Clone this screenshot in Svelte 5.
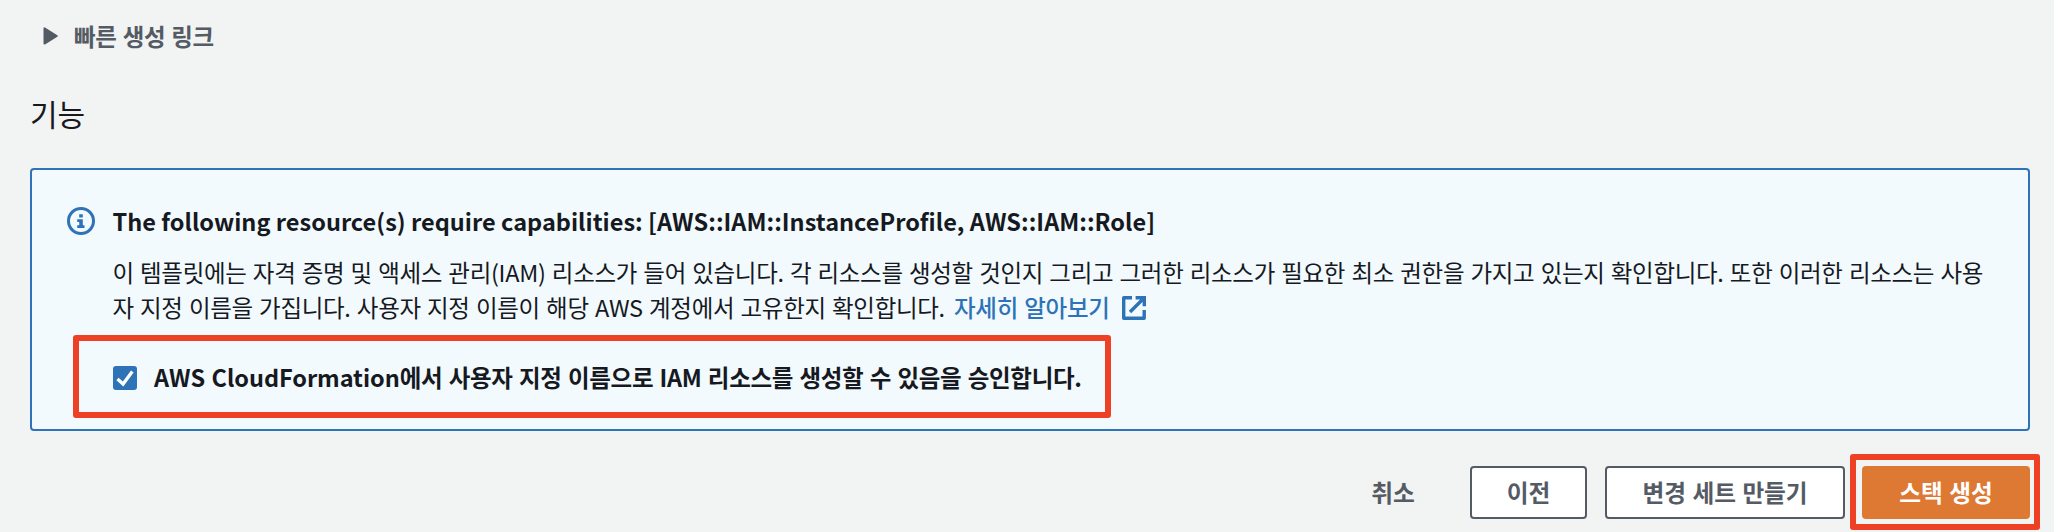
<script>
  let accepted = $state(true);
</script>

<main>
  <div class="expander">
    <svg width="16" height="20" viewBox="0 0 16 20"><path d="M1.5 2.4v15.2L13.8 10z" fill="#545b64" stroke="#545b64" stroke-width="2" stroke-linejoin="round" /></svg>
    <span>빠른 생성 링크</span>
  </div>

  <h2>기능</h2>

  <section class="alert">
    <svg class="info" width="28" height="28" viewBox="0 0 28 28">
      <circle cx="14" cy="14" r="12.5" fill="none" stroke="#2e73b8" stroke-width="3" />
      <path d="M12.2 7.2h3.6v3.2h-3.6zM10.2 12.2h5.6v6h1.7v2.9h-7.3v-2.9h2v-3.1h-2z" fill="#2e73b8" />
    </svg>
    <div class="body">
      <h3>The following resource(s) require capabilities: [AWS::IAM::InstanceProfile, AWS::IAM::Role]</h3>
      <p>
        이 템플릿에는 자격 증명 및 액세스 관리(IAM) 리소스가 들어 있습니다. 각 리소스를 생성할 것인지 그리고 그러한 리소스가 필요한 최소 권한을 가지고 있는지 확인합니다. 또한 이러한 리소스는 사용<br />자 지정 이름을 가집니다. 사용자 지정 이름이 해당 AWS 계정에서 고유한지 확인합니다.
        <a href="#learn">자세히 알아보기<svg width="26" height="26" viewBox="0 0 26 26" fill="none" stroke="#2e73b8" stroke-width="3.4">
            <path d="M11 2.8H2.7v20.5h20.5V15" stroke-linejoin="round" />
            <path d="M14.6 2.7h8.7v8.5M22.8 3.2L9 17" />
          </svg></a>
      </p>
      <label>
        <input type="checkbox" bind:checked={accepted} />
        <span class="box">
          {#if accepted}<svg width="24" height="24" viewBox="0 0 24 24"><path d="M4.5 13l5.6 5L19.3 5.6" fill="none" stroke="#fff" stroke-width="3.3" /></svg>{/if}
        </span>
        <span class="ack"><span class="latin">AWS CloudFormation</span>에서 사용자 지정 이름으로 IAM 리소스를 생성할 수 있음을 승인합니다.</span>
      </label>
    </div>
    <div class="mark mark-ack"></div>
  </section>

  <footer>
    <button class="link">취소</button>
    <button class="prev">이전</button>
    <button class="changeset">변경 세트 만들기</button>
    <div class="primary-wrap">
      <button class="primary">스택 생성</button>
      <div class="mark mark-create"></div>
    </div>
  </footer>
</main>

<style>
  :global(body) {
    background: #f2f3f3;
  }
  main {
    box-sizing: border-box;
    height: 532px;
    overflow: hidden;
    padding: 18px 24px 0 30px;
    font: 23.5px/35px 'Noto Sans CJK KR', 'Noto Sans', sans-serif;
    color: #16191f;
    white-space: nowrap;
  }
  .expander {
    display: flex;
    align-items: center;
    gap: 15px;
    height: 36px;
    padding-left: 13px;
    font-weight: 700;
    color: #545b64;
    letter-spacing: -0.4px;
    word-spacing: 1.3px;
  }
  h2 {
    margin: 37px 0 32px;
    font-size: 30px;
    line-height: 45px;
    font-weight: 400;
  }
  .alert {
    position: relative;
    display: flex;
    box-sizing: border-box;
    height: 263px;
    padding: 34px 35px 0;
    border: 2px solid #2e73b8;
    border-radius: 4px;
    background: #f2fafd;
  }
  .info {
    flex: none;
    margin: 3px 17.5px 0 0;
  }
  h3 {
    margin: 0;
    font-size: 23.5px;
    line-height: 35px;
    font-weight: 700;
    letter-spacing: 0.02px;
  }
  p {
    margin: 16px 0 0;
    letter-spacing: -0.31px;
    word-spacing: 1.3px;
  }
  a {
    margin-left: 3px;
    color: #2e73b8;
    text-decoration: none;
    font-weight: 500;
  }
  a svg {
    margin-left: 11px;
    vertical-align: -4px;
  }
  label {
    display: flex;
    align-items: center;
    gap: 17px;
    margin-top: 35px;
    font-weight: 700;
  }
  .ack {
    letter-spacing: -0.3px;
    word-spacing: 1.3px;
  }
  .latin {
    letter-spacing: -0.05px;
  }
  input {
    position: absolute;
    opacity: 0;
    pointer-events: none;
  }
  .box {
    width: 24px;
    height: 24px;
    margin-left: 0.5px;
    border-radius: 3px;
    background: #2e73b8;
  }
  .box svg {
    display: block;
  }
  footer {
    display: flex;
    justify-content: flex-end;
    margin: 35px 0 0;
  }
  button {
    box-sizing: border-box;
    height: 53px;
    padding: 0 0 1px;
    border: 2px solid #545b64;
    border-radius: 4px;
    background: #fff;
    color: #545b64;
    font: 700 23.7px/35px 'Noto Sans CJK KR', sans-serif;
    letter-spacing: -0.1px;
    word-spacing: 1.3px;
  }
  .link {
    width: 118px;
    margin-right: 18px;
    border-color: transparent;
    background: transparent;
  }
  .prev {
    width: 117px;
    margin-right: 18px;
  }
  .changeset {
    width: 240px;
    margin-right: 17px;
  }
  .primary-wrap {
    position: relative;
  }
  .primary {
    display: block;
    width: 168px;
    border-color: #dd7932;
    background: #dd7932;
    color: #fff;
  }
  .mark {
    position: absolute;
    box-sizing: border-box;
    border: 6px solid #ed4024;
    border-radius: 3px;
    pointer-events: none;
  }
  .mark-ack {
    left: 41px;
    top: 165px;
    width: 1038px;
    height: 83px;
  }
  .mark-create {
    left: -12px;
    top: -12px;
    width: 190px;
    height: 76px;
  }
</style>
